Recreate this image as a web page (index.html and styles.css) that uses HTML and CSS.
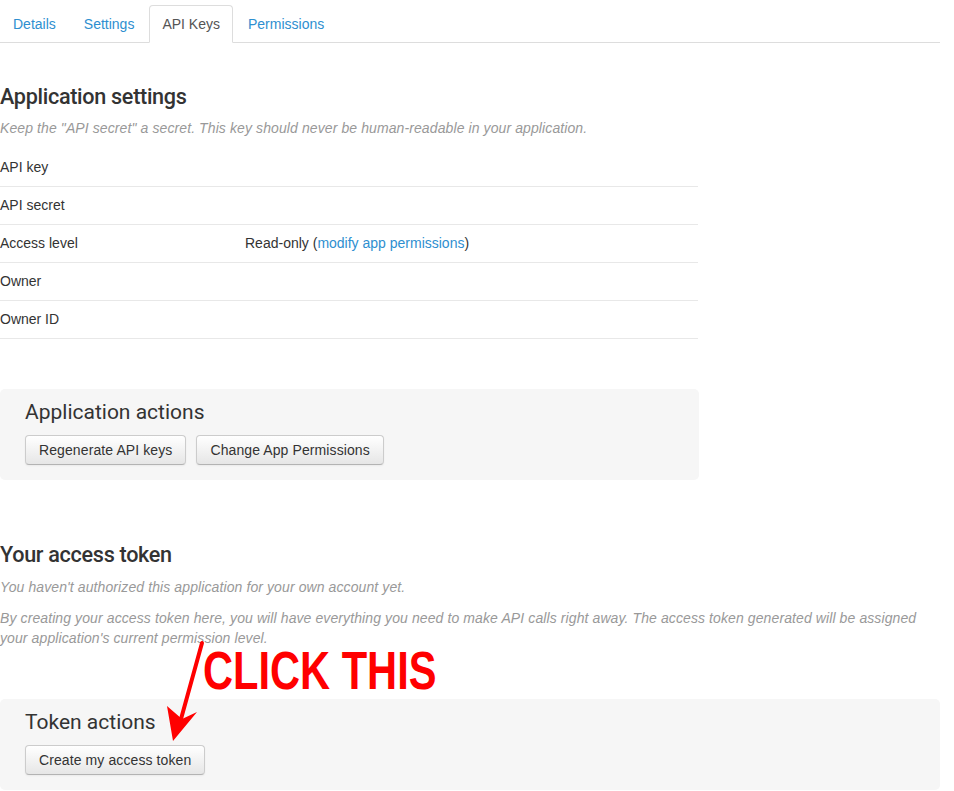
FILE: index.html
```html
<!DOCTYPE html>
<html>
<head>
<meta charset="utf-8">
<link rel="stylesheet" href="styles.css">
</head>
<body>
<div class="page">
  <ul class="tabs">
    <li><a href="#">Details</a></li>
    <li><a href="#">Settings</a></li>
    <li class="active"><a href="#">API Keys</a></li>
    <li><a href="#">Permissions</a></li>
  </ul>

  <h2 class="section-title first">Application settings</h2>
  <p class="note">Keep the "API secret" a secret. This key should never be human-readable in your application.</p>

  <table class="settings">
    <tr><td class="label">API key</td><td></td></tr>
    <tr><td class="label">API secret</td><td></td></tr>
    <tr><td class="label">Access level</td><td>Read-only (<a href="#">modify app permissions</a>)</td></tr>
    <tr><td class="label">Owner</td><td></td></tr>
    <tr><td class="label">Owner ID</td><td></td></tr>
  </table>

  <div class="action-box narrow">
    <h3>Application actions</h3>
    <div class="buttons">
      <button class="btn">Regenerate API keys</button>
      <button class="btn">Change App Permissions</button>
    </div>
  </div>

  <h2 class="section-title token">Your access token</h2>
  <p class="note first-note">You haven't authorized this application for your own account yet.</p>
  <p class="note">By creating your access token here, you will have everything you need to make API calls right away. The access token generated will be assigned your application's current permission level.</p>

  <div class="action-box wide">
    <h3>Token actions</h3>
    <div class="buttons">
      <button class="btn">Create my access token</button>
    </div>
  </div>

  <div class="callout">CLICK THIS</div>
  <svg class="arrow" width="954" height="791" viewBox="0 0 954 791">
    <line x1="202" y1="643" x2="181" y2="719" stroke="#ff0000" stroke-width="4" stroke-linecap="round"/>
    <polygon points="167,706 182,719 197,712 173,741" fill="#ff0000"/>
  </svg>
</div>
</body>
</html>
```

FILE: styles.css
```css
html, body {
  margin: 0;
  padding: 0;
  background: #fff;
}
body {
  font-family: "Liberation Sans", Arial, sans-serif;
  font-size: 14px;
  color: #333;
}
.page {
  position: relative;
  width: 954px;
  min-height: 791px;
  overflow: hidden;
}
a {
  color: #2e8fd0;
  text-decoration: none;
}
.tabs {
  list-style: none;
  margin: 0;
  padding: 5px 0 0 0;
  width: 940px;
  display: flex;
  border-bottom: 1px solid #ddd;
}
.tabs li {
  margin-bottom: -1px;
  margin-right: 2px;
}
.tabs a {
  display: block;
  padding: 8px 12px;
  line-height: 20px;
  border: 1px solid transparent;
  border-radius: 4px 4px 0 0;
}
.tabs .active a {
  color: #555;
  background: #fff;
  border-color: #ddd #ddd transparent;
}
.section-title {
  font-family: "Roboto", "Liberation Sans", sans-serif;
  font-weight: 500;
  font-size: 21.6px;
  line-height: 30px;
  margin: 0;
  color: #333;
  letter-spacing: -0.3px;
}
.section-title.first {
  margin-top: 39px;
}
.section-title.token {
  margin-top: 60px;
}
.note {
  font-style: italic;
  color: #999;
  font-size: 14px;
  line-height: 20px;
  letter-spacing: 0.1px;
  margin: 6px 0 11px;
  width: 930px;
}
.note.first-note {
  margin: 7px 0 11px;
}
.note + .note {
  margin-top: 0;
}
.settings {
  width: 698px;
  border-collapse: collapse;
}
.settings td {
  padding: 8px 0;
  line-height: 21px;
  border-bottom: 1px solid #e8e8e8;
  vertical-align: top;
}
.settings td.label {
  width: 245px;
}
.action-box {
  background: #f6f6f6;
  border-radius: 5px;
  padding: 11px 25px 15px;
  box-sizing: border-box;
}
.action-box.narrow {
  width: 699px;
  margin-top: 50px;
}
.action-box.wide {
  width: 940px;
  margin-top: 51px;
}
.action-box h3 {
  margin: 0;
  font-family: "Roboto", "Liberation Sans", sans-serif;
  font-weight: 400;
  font-size: 21px;
  line-height: 24px;
  color: #333;
}
.buttons {
  display: flex;
  gap: 10px;
  margin-top: 11px;
}
.btn {
  font-family: "Liberation Sans", Arial, sans-serif;
  font-size: 14px;
  line-height: 20px;
  color: #333;
  padding: 4px 13px;
  border: 1px solid #ccc;
  border-bottom-color: #b3b3b3;
  border-radius: 4px;
  background: linear-gradient(#ffffff, #e6e6e6);
  box-shadow: inset 0 1px 0 rgba(255,255,255,0.2), 0 1px 2px rgba(0,0,0,0.05);
  cursor: pointer;
  letter-spacing: 0.1px;
}
.callout {
  position: absolute;
  left: 203px;
  top: 641px;
  font-family: "Liberation Sans", Arial, sans-serif;
  font-weight: bold;
  font-size: 53px;
  line-height: 60px;
  color: #ff0000;
  transform: scaleX(0.785);
  transform-origin: left top;
  white-space: nowrap;
}
.arrow {
  position: absolute;
  left: 0;
  top: 0;
  pointer-events: none;
}
```
